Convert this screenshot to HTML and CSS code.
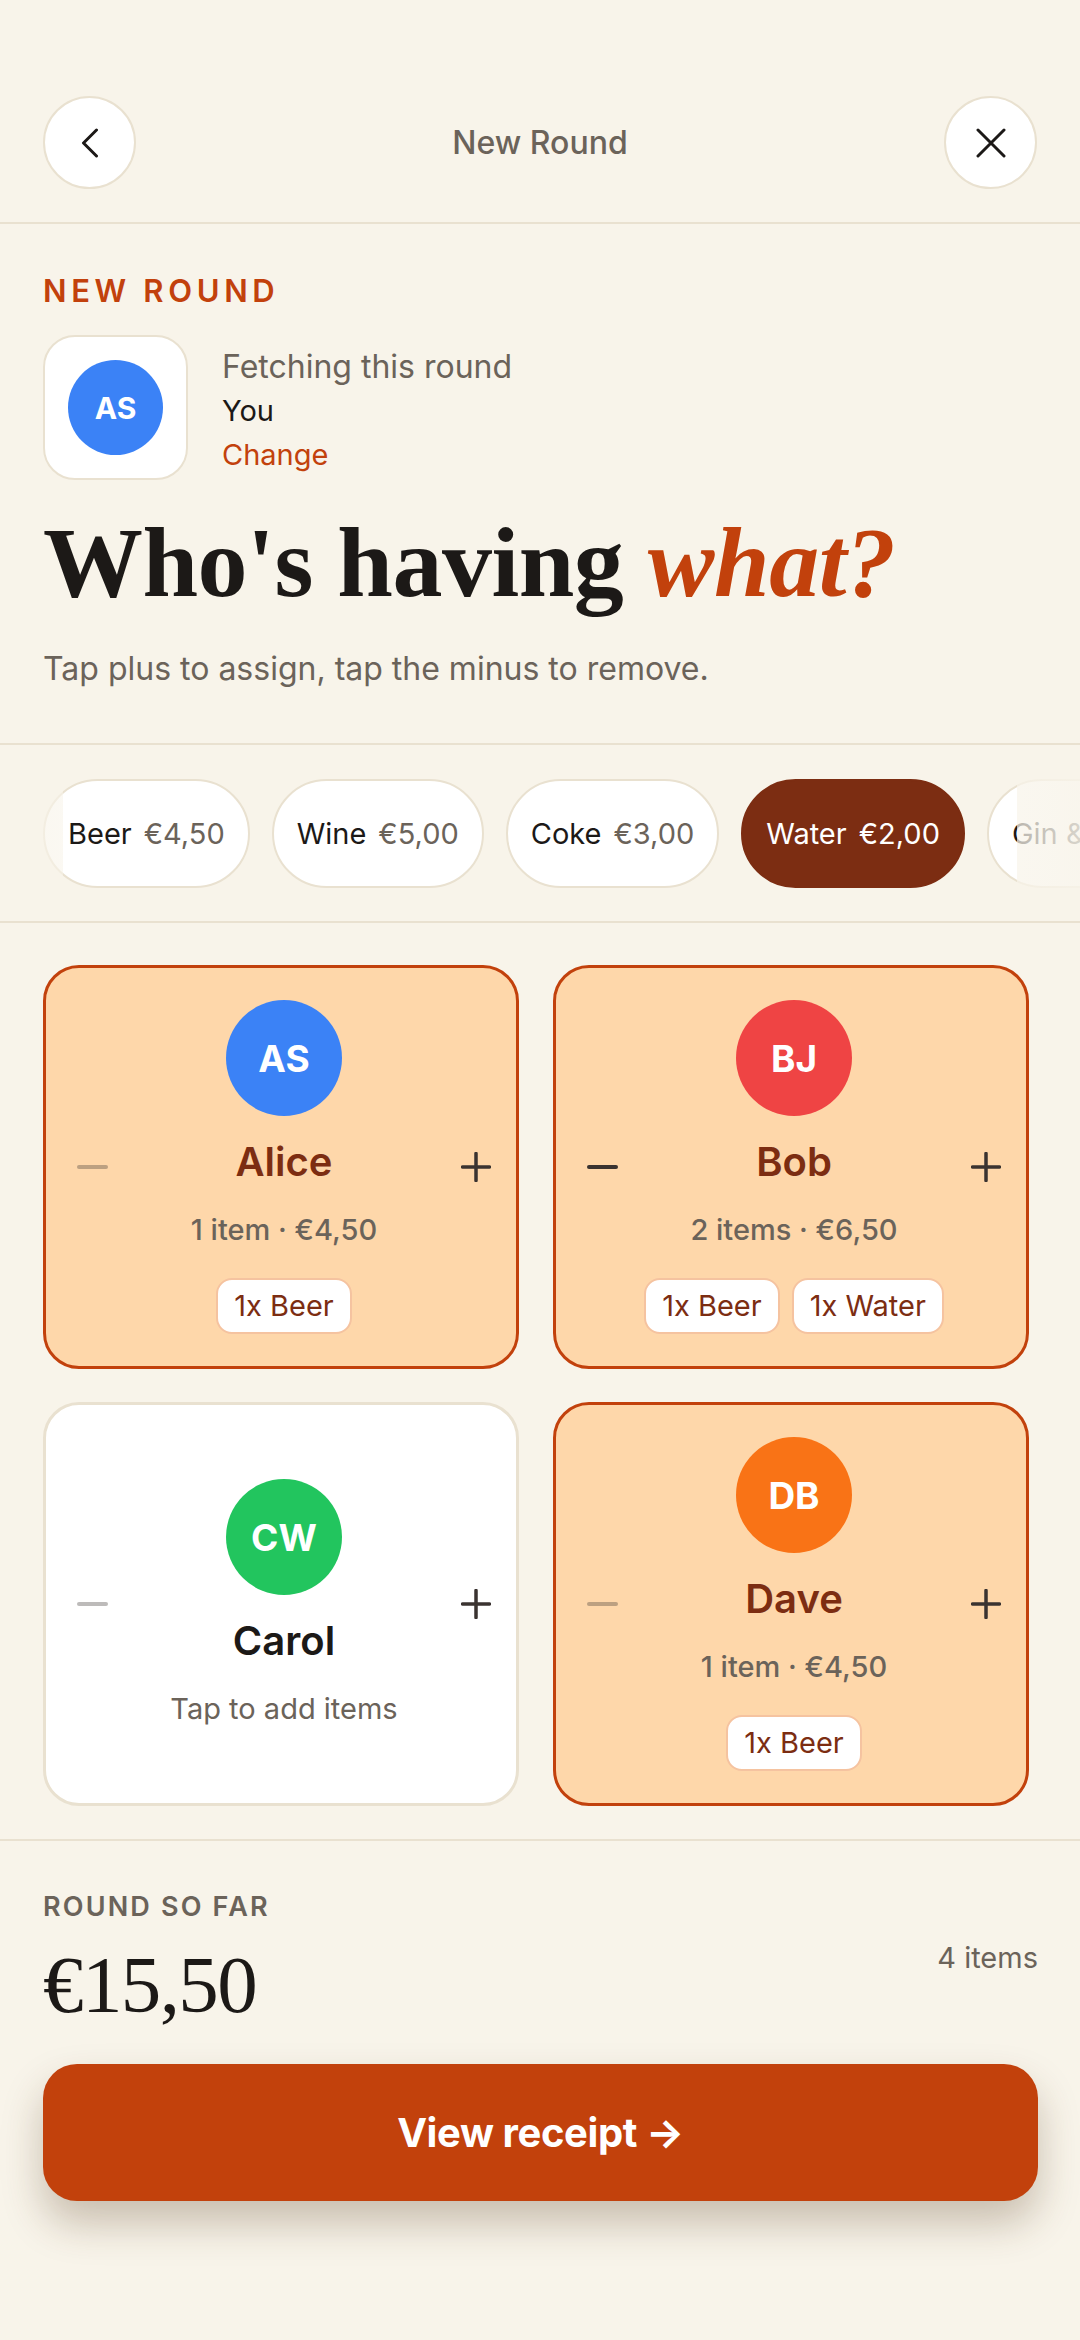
FILE: index.html
```html
<!DOCTYPE html>
<html lang="en">
<head>
<meta charset="utf-8">
<title>New Round</title>
<link rel="stylesheet" href="styles.css">
</head>
<body>
<div class="app">
  <header class="topbar">
    <button class="icon-btn" aria-label="Back">
      <svg width="18" height="30" viewBox="0 0 18 30"><path d="M15.5 2 L2.5 15 L15.5 28" fill="none" stroke="#1c1917" stroke-width="3" stroke-linecap="round" stroke-linejoin="round"/></svg>
    </button>
    <div class="title">New Round</div>
    <button class="icon-btn" aria-label="Close">
      <svg width="30" height="30" viewBox="0 0 30 30"><path d="M2 2 L28 28 M28 2 L2 28" fill="none" stroke="#1c1917" stroke-width="3" stroke-linecap="round"/></svg>
    </button>
  </header>

  <section class="intro">
    <div class="eyebrow">NEW ROUND</div>
    <div class="fetcher">
      <div class="fetch-box"><div class="avatar avatar-lg blue">AS</div></div>
      <div class="fetch-text">
        <div class="muted fetch-lead">Fetching this round</div>
        <div class="dark">You</div>
        <div class="accent">Change</div>
      </div>
    </div>
    <h1 class="headline">Who's having <em>what?</em></h1>
    <p class="sub">Tap plus to assign, tap the minus to remove.</p>
  </section>

  <section class="chips-wrap">
    <div class="chips">
      <div class="chip"><span class="chip-name">Beer</span><span class="chip-price">€4,50</span></div>
      <div class="chip"><span class="chip-name">Wine</span><span class="chip-price">€5,00</span></div>
      <div class="chip"><span class="chip-name">Coke</span><span class="chip-price">€3,00</span></div>
      <div class="chip chip-active"><span class="chip-name">Water</span><span class="chip-price">€2,00</span></div>
      <div class="chip"><span class="chip-name">Gin &amp; Tonic</span><span class="chip-price">€7,00</span></div>
    </div>
    <div class="fade fade-left"></div>
    <div class="fade fade-right"></div>
  </section>

  <section class="people">
    <div class="card active">
      <div class="ctrl minus faded"><svg width="31" height="6" viewBox="0 0 31 6"><path d="M2 3 H29" stroke="#3a3330" stroke-width="4" stroke-linecap="round"/></svg></div>
      <div class="card-body">
        <div class="avatar blue">AS</div>
        <div class="name">Alice</div>
        <div class="meta">1 item · €4,50</div>
        <div class="tags"><span class="tag">1x Beer</span></div>
      </div>
      <div class="ctrl plus"><svg width="30" height="30" viewBox="0 0 30 30"><path d="M15 1.5 V28.5 M1.5 15 H28.5" stroke="#3a3330" stroke-width="3.5" stroke-linecap="round"/></svg></div>
    </div>

    <div class="card active">
      <div class="ctrl minus"><svg width="31" height="6" viewBox="0 0 31 6"><path d="M2 3 H29" stroke="#3a3330" stroke-width="4" stroke-linecap="round"/></svg></div>
      <div class="card-body">
        <div class="avatar red">BJ</div>
        <div class="name">Bob</div>
        <div class="meta">2 items · €6,50</div>
        <div class="tags"><span class="tag">1x Beer</span><span class="tag">1x Water</span></div>
      </div>
      <div class="ctrl plus"><svg width="30" height="30" viewBox="0 0 30 30"><path d="M15 1.5 V28.5 M1.5 15 H28.5" stroke="#3a3330" stroke-width="3.5" stroke-linecap="round"/></svg></div>
    </div>

    <div class="card">
      <div class="ctrl minus faded"><svg width="31" height="6" viewBox="0 0 31 6"><path d="M2 3 H29" stroke="#3a3330" stroke-width="4" stroke-linecap="round"/></svg></div>
      <div class="card-body">
        <div class="avatar green">CW</div>
        <div class="name">Carol</div>
        <div class="meta regular">Tap to add items</div>
      </div>
      <div class="ctrl plus"><svg width="30" height="30" viewBox="0 0 30 30"><path d="M15 1.5 V28.5 M1.5 15 H28.5" stroke="#3a3330" stroke-width="3.5" stroke-linecap="round"/></svg></div>
    </div>

    <div class="card active">
      <div class="ctrl minus faded"><svg width="31" height="6" viewBox="0 0 31 6"><path d="M2 3 H29" stroke="#3a3330" stroke-width="4" stroke-linecap="round"/></svg></div>
      <div class="card-body">
        <div class="avatar orange">DB</div>
        <div class="name">Dave</div>
        <div class="meta">1 item · €4,50</div>
        <div class="tags"><span class="tag">1x Beer</span></div>
      </div>
      <div class="ctrl plus"><svg width="30" height="30" viewBox="0 0 30 30"><path d="M15 1.5 V28.5 M1.5 15 H28.5" stroke="#3a3330" stroke-width="3.5" stroke-linecap="round"/></svg></div>
    </div>
  </section>

  <section class="summary">
    <div class="summary-row">
      <div class="summary-left">
        <div class="label">ROUND SO FAR</div>
        <div class="total">€15,50</div>
      </div>
      <div class="count">4 items</div>
    </div>
    <button class="cta">View receipt →</button>
  </section>
</div>
</body>
</html>
```

FILE: styles.css
```css
* { box-sizing: border-box; }

html, body {
  margin: 0;
  padding: 0;
  background: #f8f4ea;
}

body {
  font-family: Inter, "Noto Sans", "Liberation Sans", sans-serif;
  color: #1c1917;
}

.app {
  width: 1080px;
  min-height: 2340px;
  background: #f8f4ea;
}

/* Top bar */
.topbar {
  display: flex;
  align-items: center;
  justify-content: space-between;
  padding: 96px 43px 33px;
  border-bottom: 2px solid #e9e1d0;
}

.icon-btn {
  width: 93px;
  height: 93px;
  border-radius: 50%;
  background: #ffffff;
  border: 2px solid #e9e1d0;
  display: flex;
  align-items: center;
  justify-content: center;
  padding: 0;
}

.title {
  font-size: 32px;
  font-weight: 500;
  color: #6b635a;
}

/* Intro */
.intro {
  padding: 48px 43px 52px;
  border-bottom: 2px solid #e9e1d0;
}

.eyebrow {
  font-size: 31px;
  line-height: 37px;
  font-weight: 600;
  letter-spacing: 0.15em;
  color: #c2410c;
}

.fetcher {
  display: flex;
  align-items: center;
  gap: 34px;
  margin-top: 26px;
}

.fetch-box {
  width: 145px;
  height: 145px;
  border-radius: 32px;
  background: #ffffff;
  border: 2px solid #e9e1d0;
  display: flex;
  align-items: center;
  justify-content: center;
}

.fetch-text {
  font-size: 29px;
  line-height: 44px;
  padding-top: 6px;
}

.fetch-lead {
  font-size: 32px;
}

.muted { color: #6b635a; }
.dark { color: #1c1917; }
.accent { color: #c2410c; }

.headline {
  margin: 28px 0 0;
  font-family: "Liberation Serif", "Times New Roman", serif;
  font-weight: 700;
  font-size: 100px;
  line-height: 110px;
  letter-spacing: -0.005em;
  color: #1c1917;
}

.headline em {
  font-style: italic;
  color: #c2410c;
}

.sub {
  margin: 29px 0 0;
  font-size: 32px;
  line-height: 44px;
  color: #6b635a;
}

/* Chips */
.chips-wrap {
  position: relative;
  overflow: hidden;
  padding: 34px 0 33px;
  border-bottom: 2px solid #e9e1d0;
}

.chips {
  display: flex;
  gap: 22px;
  padding: 0 43px;
  white-space: nowrap;
}

.chip {
  flex: none;
  height: 109px;
  display: flex;
  align-items: center;
  gap: 12px;
  padding: 0 23px;
  border-radius: 55px;
  background: #ffffff;
  border: 2px solid #e9e1d0;
  font-size: 29px;
}

.chip-name { color: #1c1917; }
.chip-price { color: #6b635a; }

.chip-active {
  background: #7c2d12;
  border-color: #7c2d12;
}

.chip-active .chip-name,
.chip-active .chip-price { color: #ffffff; }

.fade {
  position: absolute;
  top: 0;
  bottom: -2px;
  width: 63px;
}

.fade-left {
  left: 0;
  background: linear-gradient(to right, rgba(248, 244, 234, 0.8), rgba(248, 244, 234, 0.6));
}

.fade-right {
  right: 0;
  background: linear-gradient(to left, rgba(248, 244, 234, 0.85), rgba(248, 244, 234, 0.72));
}

/* People grid */
.people {
  display: grid;
  grid-template-columns: 1fr 1fr;
  gap: 33px 34px;
  padding: 42px 51px 33px 43px;
  border-bottom: 2px solid #e9e1d0;
}

.card {
  display: flex;
  align-items: center;
  padding: 32px 12px 32px 18px;
  border-radius: 36px;
  background: #ffffff;
  border: 3px solid #e9e1d0;
}

.card.active {
  background: #fed7aa;
  border-color: #c2410c;
}

.ctrl {
  flex: none;
  width: 56px;
  display: flex;
  align-items: center;
  justify-content: center;
}

.ctrl.faded { opacity: 0.33; }

.card-body {
  flex: 1;
  display: flex;
  flex-direction: column;
  align-items: center;
}

.avatar {
  width: 116px;
  height: 116px;
  border-radius: 50%;
  display: flex;
  align-items: center;
  justify-content: center;
  color: #ffffff;
  font-weight: 700;
  font-size: 37px;
}

.avatar-lg {
  width: 95px;
  height: 95px;
  font-size: 30px;
}

.blue { background: #3b82f6; }
.red { background: #ef4444; }
.green { background: #22c55e; }
.orange { background: #f97316; }

.name {
  margin-top: 20px;
  font-size: 40px;
  line-height: 52px;
  font-weight: 600;
  color: #1c1917;
}

.card.active .name { color: #7c2d12; }

.meta {
  margin-top: 22px;
  font-size: 29px;
  line-height: 40px;
  font-weight: 500;
  color: #6b635a;
}

.meta.regular { font-weight: 400; }

.tags {
  display: flex;
  gap: 12px;
  margin-top: 28px;
}

.tag {
  display: block;
  padding: 8px 16px;
  font-size: 29px;
  line-height: 36px;
  color: #7c2d12;
  background: #ffffff;
  border: 2px solid #f5c3a0;
  border-radius: 16px;
}

/* Summary */
.summary {
  padding: 49px 42px 0 43px;
}

.summary-row {
  display: flex;
  align-items: center;
  justify-content: space-between;
}

.label {
  font-size: 27px;
  line-height: 34px;
  font-weight: 600;
  letter-spacing: 0.08em;
  color: #6b635a;
}

.total {
  margin-top: 21px;
  font-family: "Liberation Serif", "Times New Roman", serif;
  font-size: 81px;
  line-height: 80px;
  color: #1c1917;
  letter-spacing: -0.02em;
}

.count {
  font-size: 29px;
  line-height: 40px;
  color: #6b635a;
}

.cta {
  display: block;
  width: 100%;
  height: 137px;
  margin-top: 39px;
  border: none;
  border-radius: 34px;
  background: #c2410c;
  color: #ffffff;
  font-family: Inter, "Noto Sans", sans-serif;
  font-size: 40px;
  font-weight: 700;
  letter-spacing: -0.01em;
  box-shadow: 0 22px 40px rgba(80, 50, 20, 0.28);
}
```
